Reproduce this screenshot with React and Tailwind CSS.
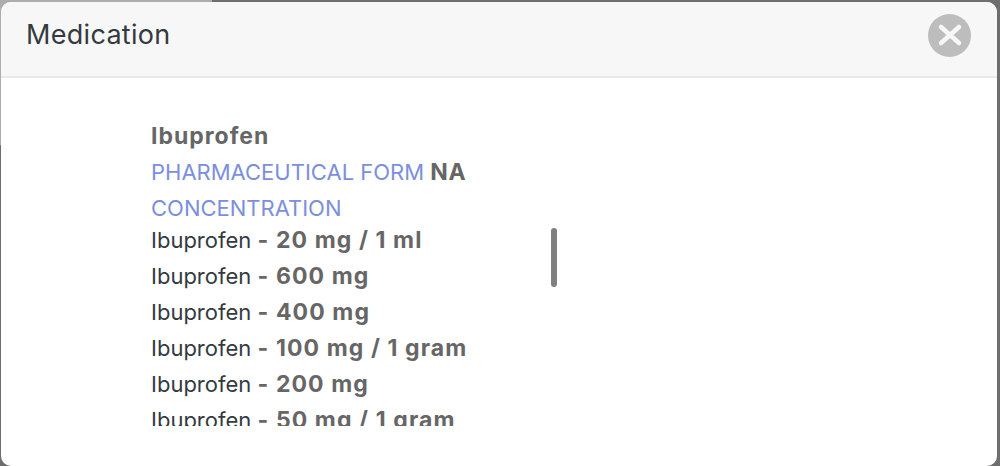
const doses = ['20 mg / 1 ml', '600 mg', '400 mg', '100 mg / 1 gram', '200 mg', '50 mg / 1 gram', '10 mg']

export default function App() {
  return (
    <div className="h-[466px] overflow-hidden bg-[#6e6e6e] bg-[linear-gradient(#adadad,#adadad)] bg-[size:212px_145px] bg-no-repeat pt-[2px] pl-[1px] pr-[3px] font-['Inter',sans-serif]">
      <div className="flex h-full flex-col overflow-hidden rounded-[10px] bg-white">
        <div className="flex h-[76px] shrink-0 items-center justify-between border-b-2 border-[#e9e9e9] bg-[#f7f7f7] pb-[8px] pl-[25px] pr-[26px]">
          <h1 className="text-[27px] font-normal tracking-[0.3px] text-[#343a40]">Medication</h1>
          <button type="button" className="flex h-[43px] w-[43px] items-center justify-center rounded-full bg-[#bdbdbd]">
            <svg width="26" height="24" viewBox="0 0 26 24" fill="none" stroke="#f7f7f7" strokeWidth="4.5" strokeLinecap="round">
              <path d="M4 4 L22 20 M22 4 L4 20" />
            </svg>
          </button>
        </div>
        <div className="pl-[150px] pt-[40px]">
          <div className="relative h-[308px] w-[406px] overflow-hidden text-[22px] leading-[36px] text-[#343a40]">
            <div className="text-[23px] font-bold tracking-[1px] text-[#666666]">Ibuprofen</div>
            <div className="text-[#7c8fdc]">
              PHARMACEUTICAL FORM <span className="text-[23px] font-bold tracking-[0.6px] text-[#666666]">NA</span>
            </div>
            <div className="h-[32px] text-[#7c8fdc]">CONCENTRATION</div>
            {doses.map((d) => (
              <div key={d}>
                Ibuprofen <span className="text-[23px] font-bold tracking-[1.1px] text-[#666666]">- {d}</span>
              </div>
            ))}
            <div className="absolute right-0 top-[110px] h-[59px] w-[6px] rounded-full bg-[#808080]" />
          </div>
        </div>
      </div>
    </div>
  )
}
